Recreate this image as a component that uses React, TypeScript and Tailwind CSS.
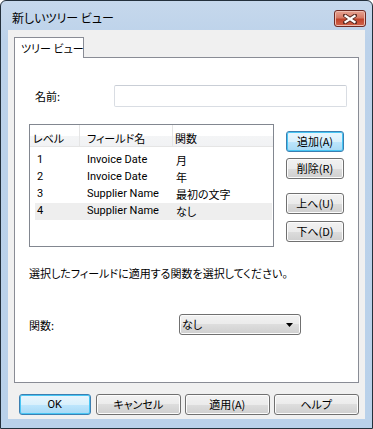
import type { ReactNode } from "react";

const FONT = "font-['Noto_Sans_CJK_JP',sans-serif] [font-feature-settings:'palt']";
const LATIN = "font-['Roboto','Noto_Sans_CJK_JP',sans-serif]";

const ROWS = [
  { level: "1", field: "Invoice Date", fn: "月" },
  { level: "2", field: "Invoice Date", fn: "年" },
  { level: "3", field: "Supplier Name", fn: "最初の文字" },
  { level: "4", field: "Supplier Name", fn: "なし" },
];

function Btn({ children, w, primary, className = "" }: { children: ReactNode; w: string; primary?: boolean; className?: string }) {
  return (
    <button
      type="button"
      className={`${w} h-[21px] rounded-[3px] border text-[11px] leading-none text-black ${
        primary
          ? "border-[#3c7fb1] bg-[linear-gradient(#eaf6fd_0%,#d9f0fc_50%,#bee6fd_50%,#a7d9f5_100%)] shadow-[inset_0_0_0_1px_#48c6f4]"
          : "border-[#707070] bg-[linear-gradient(#f2f2f2_0%,#ebebeb_50%,#dddddd_50%,#cfcfcf_100%)] shadow-[inset_0_0_0_1px_#fcfcfc]"
      } ${className}`}
    >
      {children}
    </button>
  );
}

export default function App() {
  return (
    <div className={`w-[373px] h-[429px] overflow-hidden ${FONT}`}>
      <div className="flex h-full flex-col rounded-t-[6px] border border-[#23303c] bg-[linear-gradient(#c6d8ec_0%,#bcd2ea_40px,#b9d1ea_100%)] px-[7px] pb-[9px]">
        {/* Title bar */}
        <div className="flex h-[29px] shrink-0 items-start justify-between">
          <span className="ml-[4px] mt-[9px] text-[12px] leading-[16px] text-black">新しいツリー ビュー</span>
          <div className="mr-[-1px] mt-[9px] flex h-[17px] w-[32px] items-center justify-center rounded-[3px] border border-[#6d2a24] bg-[linear-gradient(#e8a493_0%,#d57a66_45%,#c0432b_55%,#d1654c_100%)] shadow-[inset_0_0_0_1px_#eebcb0]">
            <svg width="14" height="10" viewBox="0 0 14 10">
              <path d="M2 1.5L12 8.5M12 1.5L2 8.5" stroke="#5a2a22" strokeWidth="4" strokeLinecap="square" />
              <path d="M2.5 2L11.5 8M11.5 2L2.5 8" stroke="#ffffff" strokeWidth="2.2" strokeLinecap="square" />
            </svg>
          </div>
        </div>

        {/* Client area */}
        <div className="flex flex-1 flex-col bg-[#f0f0f0] px-[6px] pt-[7px]">
          {/* Tab header */}
          <div className="flex h-[20px]">
            <div className="relative z-10 flex h-[21px] w-[70px] items-start whitespace-nowrap border border-b-0 border-[#898c95] bg-white pl-[6px] pt-[3px] text-[11px] leading-[14px] text-black">
              ツリー ビュー
            </div>
          </div>

          {/* Tab panel */}
          <div className="flex h-[326px] w-[345px] flex-col border border-[#898c95] bg-white text-[11px] text-black">
            {/* Name */}
            <div className="mt-[27px] flex items-center pl-[20px]">
              <span className="w-[79px] leading-[16px]">名前:</span>
              <div className="h-[22px] w-[233px] rounded-[2px] border border-[#d9dde3] border-t-[#c9ced6] bg-white" />
            </div>

            {/* List + buttons */}
            <div className="mt-[17px] flex pl-[14px]">
              <div className="h-[123px] w-[245px] border border-[#828790] bg-white">
                <div className="flex h-[22px] border-b border-[#e5e5e5] bg-[linear-gradient(#ffffff_0%,#ffffff_50%,#f4f5f6_50%,#f1f2f4_100%)] leading-[26px]">
                  <div className="w-[50px] border-r border-[#e5e5e5] pl-[3px]">レベル</div>
                  <div className="w-[93px] border-r border-[#e5e5e5] pl-[7px]">フィールド名</div>
                  <div className="flex-1 pl-[2px]">関数</div>
                </div>
                <div className="mt-[5px] flex flex-col">
                  {ROWS.map((r, i) => (
                    <div
                      key={r.level}
                      className={`ml-[5px] mr-[1px] flex h-[17px] items-center ${i === 3 ? "bg-[#eeeeee]" : ""}`}
                    >
                      <div className={`w-[45px] pl-[2px] ${LATIN}`}>{r.level}</div>
                      <div className={`w-[93px] whitespace-nowrap pl-[7px] ${LATIN}`}>{r.field}</div>
                      <div className="pl-[3px]">{r.fn}</div>
                    </div>
                  ))}
                </div>
              </div>
              <div className="ml-[12px] mt-[7px] flex flex-col">
                <Btn w="w-[58px]" primary>追加(A)</Btn>
                <Btn w="w-[58px]" className="mt-[6px]">削除(R)</Btn>
                <Btn w="w-[58px]" className="mt-[14px]">上へ(U)</Btn>
                <Btn w="w-[58px]" className="mt-[7px]">下へ(D)</Btn>
              </div>
            </div>

            {/* Description */}
            <p className="mt-[18px] pl-[14px] leading-[16px]">選択したフィールドに適用する関数を選択してください。</p>

            {/* Function select */}
            <div className="mt-[33px] flex items-center pl-[14px]">
              <span className="w-[150px] leading-[16px]">関数:</span>
              <div className="flex h-[21px] w-[122px] items-center justify-between rounded-[3px] border border-[#707070] bg-[linear-gradient(#f2f2f2_0%,#ebebeb_50%,#dddddd_50%,#cfcfcf_100%)] pl-[2px] pr-[7px] shadow-[inset_0_0_0_1px_#fcfcfc]">
                <span>なし</span>
                <svg width="7" height="4" viewBox="0 0 7 4">
                  <path d="M0 0H7L3.5 4Z" fill="#000" />
                </svg>
              </div>
            </div>
          </div>

          {/* Bottom buttons */}
          <div className="mt-[11px] flex items-start pl-[5px]">
            <Btn w="w-[72px]" primary className={LATIN}>OK</Btn>
            <Btn w="w-[86px]" className="ml-[5px]">キャンセル</Btn>
            <Btn w="w-[85px]" className="ml-[4px]">適用(A)</Btn>
            <Btn w="w-[86px]" className="ml-[4px]">ヘルプ</Btn>
          </div>
        </div>
      </div>
    </div>
  );
}
